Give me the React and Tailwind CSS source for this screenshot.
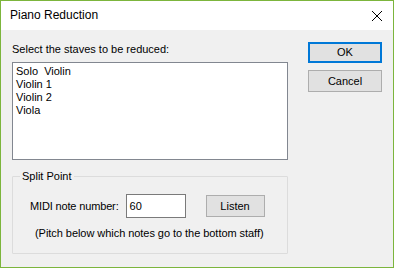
export default function App() {
  const staves = ['Solo  Violin', 'Violin 1', 'Violin 2', 'Viola'];

  return (
    <div className="w-[394px] h-[268px] border border-[#7cb53c] bg-[#f0f0f0] flex flex-col text-[11px] leading-[13px] text-black font-['Liberation_Sans',Arial,sans-serif]">
      {/* title bar */}
      <div className="h-[29px] bg-white flex items-center justify-between pl-[9px] pr-[9px]">
        <span className="text-[12px] mt-[-1px]">Piano Reduction</span>
        <svg width="12" height="12" viewBox="0 0 12 12" className="mr-[1px]">
          <path d="M1 1 L11 11 M11 1 L1 11" stroke="#000" strokeWidth="1" />
        </svg>
      </div>

      <div className="flex pl-[11px] pt-[13px]">
        <div className="flex flex-col w-[276px]">
          <p className="whitespace-pre">Select the staves to be reduced:</p>
          <div className="mt-[6px] h-[98px] bg-white border border-[#828790] pl-[3px] pt-[2px]">
            {staves.map((s) => (
              <div key={s} className="whitespace-pre">{s}</div>
            ))}
          </div>

          {/* group box */}
          <div className="relative mt-[16px] h-[78px] border border-[#dcdcdc] rounded-[1px]">
            <span className="absolute left-[7px] top-[-7px] px-[2px] bg-[#f0f0f0]">Split Point</span>
            <div className="flex items-center mt-[17px] pl-[17px]">
              <span className="tracking-[-0.15px]">MIDI note number:</span>
              <div className="ml-[7px] w-[60px] h-[24px] bg-white border border-[#7a7a7a] flex items-center pl-[3px]">60</div>
              <button className="ml-[20px] w-[59px] h-[22px] bg-[#e1e1e1] border border-[#adadad]">Listen</button>
            </div>
            <p className="mt-[9px] pl-[22px] tracking-[-0.05px]">(Pitch below which notes go to the bottom staff)</p>
          </div>
        </div>

        <div className="flex flex-col ml-[20px] mt-[-1px] gap-[7px]">
          <button className="w-[74px] h-[21px] bg-[#e1e1e1] border-2 border-[#0078d7]">OK</button>
          <button className="w-[74px] h-[22px] bg-[#e1e1e1] border border-[#adadad]">Cancel</button>
        </div>
      </div>
    </div>
  );
}
